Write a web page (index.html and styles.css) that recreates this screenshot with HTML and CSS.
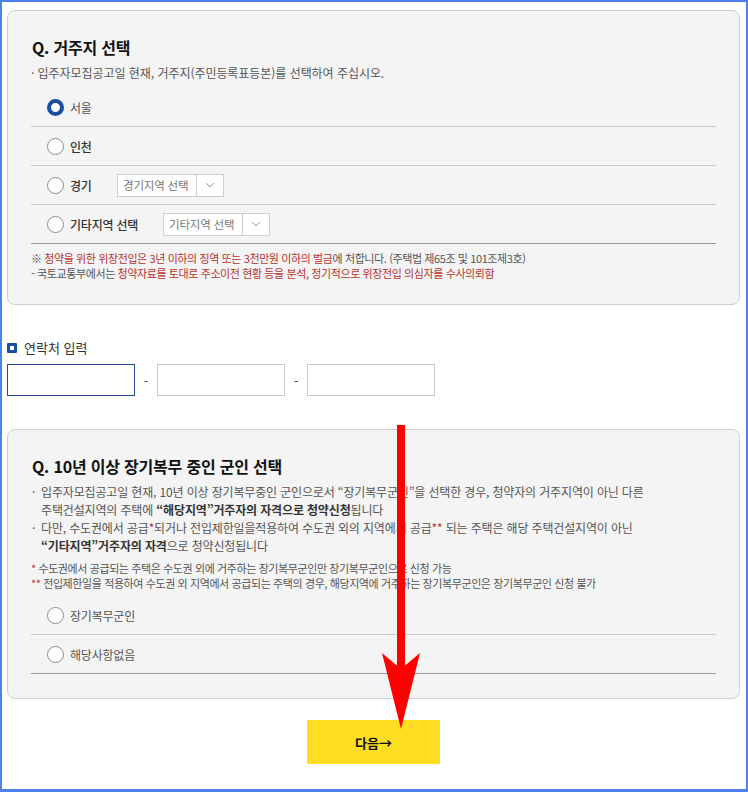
FILE: index.html
```html
<!DOCTYPE html>
<html lang="ko">
<head>
<meta charset="utf-8">
<title>청약 자격 선택</title>
<link rel="stylesheet" href="styles.css">
</head>
<body>
<div class="frame">
  <section class="card card-residence">
    <h2 class="q-title">Q. 거주지 선택</h2>
    <p class="desc">· 입주자모집공고일 현재, 거주지(주민등록표등본)를 선택하여 주십시오.</p>
    <ul class="options">
      <li class="opt"><span class="radio checked"></span><span class="lbl lbl-light">서울</span></li>
      <li class="opt"><span class="radio"></span><span class="lbl">인천</span></li>
      <li class="opt"><span class="radio"></span><span class="lbl lbl-gg">경기</span>
        <span class="select"><span class="sel-text">경기지역 선택</span><span class="sel-arrow"><svg width="10" height="6" viewBox="0 0 10 6"><path d="M1 1 L5 5 L9 1" fill="none" stroke="#999" stroke-width="1"/></svg></span></span>
      </li>
      <li class="opt last"><span class="radio"></span><span class="lbl lbl-etc">기타지역 선택</span>
        <span class="select"><span class="sel-text">기타지역 선택</span><span class="sel-arrow"><svg width="10" height="6" viewBox="0 0 10 6"><path d="M1 1 L5 5 L9 1" fill="none" stroke="#999" stroke-width="1"/></svg></span></span>
      </li>
    </ul>
    <div class="notes">
      <p>※ <span class="red">청약을 위한 위장전입은 3년 이하의 징역 또는 3천만원 이하의 벌금</span>에 처합니다. (주택법 제65조 및 101조제3호)</p>
      <p>- 국토교통부에서는 <span class="red">청약자료를 토대로 주소이전 현황 등을 분석, 정기적으로 위장전입 의심자를 수사의뢰함</span></p>
    </div>
  </section>

  <section class="contact">
    <h3 class="contact-title"><span class="sq"></span>연락처 입력</h3>
    <div class="phone">
      <span class="inp focus"></span><span class="dash">-</span><span class="inp"></span><span class="dash">-</span><span class="inp"></span>
    </div>
  </section>

  <section class="card card-military">
    <h2 class="q-title">Q. 10년 이상 장기복무 중인 군인 선택</h2>
    <ul class="bullets">
      <li>입주자모집공고일 현재, 10년 이상 장기복무중인 군인으로서 “장기복무군인”을 선택한 경우, 청약자의 거주지역이 아닌 다른<br>주택건설지역의 주택에 <b>“해당지역”거주자의 자격으로 청약신청</b>됩니다</li>
      <li>다만, 수도권에서 공급<span class="red">*</span>되거나 전입제한일을적용하여 수도권 외의 지역에서 공급<span class="red">**</span> 되는 주택은 해당 주택건설지역이 아닌<br><b>“기타지역”거주자의 자격</b>으로 청약신청됩니다</li>
    </ul>
    <div class="foot">
      <p><span class="red">*</span> 수도권에서 공급되는 주택은 수도권 외에 거주하는 장기복무군인만 장기복무군인으로 신청 가능</p>
      <p><span class="red">**</span> 전입제한일을 적용하여 수도권 외 지역에서 공급되는 주택의 경우, 해당지역에 거주하는 장기복무군인은 장기복무군인 신청 불가</p>
    </div>
    <ul class="options options-mil">
      <li class="opt"><span class="radio"></span><span class="lbl lbl-light">장기복무군인</span></li>
      <li class="opt last"><span class="radio"></span><span class="lbl lbl-light">해당사항없음</span></li>
    </ul>
  </section>

  <div class="actions">
    <button class="next">다음→</button>
  </div>

  <svg class="annot-arrow" width="48" height="310" viewBox="0 0 48 310">
    <rect x="16" y="0" width="8" height="246" fill="#ff0000"/>
    <polygon points="1,228 20,244 39,228 20,304" fill="#ff0000"/>
  </svg>
</div>
</body>
</html>
```

FILE: styles.css
```css
* { box-sizing: border-box; }
html, body { margin: 0; padding: 0; background: #fff; }
body {
  font-family: "Noto Sans CJK KR", "Noto Sans", sans-serif;
  color: #333;
}
.frame {
  position: relative;
  width: 748px;
  height: 792px;
  border: 2px solid #4f80f0;
  border-bottom-width: 3px;
  padding: 8px 6px 0 5px;
  overflow: hidden;
}
.card {
  background: #f4f4f4;
  border: 1px solid #cfcfcf;
  border-radius: 8px;
  padding: 0 23px 0 23px;
}
.card-residence { height: 295px; padding-top: 24px; }
.q-title {
  margin: 0;
  font-size: 16px;
  line-height: 24px;
  font-weight: 700;
  color: #111;
  padding-left: 1px;
  letter-spacing: -0.2px;
}
.desc {
  margin: 5px 0 0;
  font-size: 12px;
  line-height: 18px;
  color: #555;
  letter-spacing: -0.05px;
}
.options { list-style: none; margin: 6px 0 0; padding: 0; }
.opt {
  display: flex;
  align-items: center;
  height: 39px;
  border-bottom: 1px solid #c9c9c9;
  padding-left: 16px;
}
.opt.last { border-bottom-color: #999; }
.radio {
  width: 17px;
  height: 17px;
  border-radius: 50%;
  background: #fff;
  border: 1px solid #8c8c8c;
  flex: none;
}
.radio.checked { border: 4px solid #1a4f9f; }
.lbl {
  margin-left: 6px;
  font-size: 12px;
  font-weight: 500;
  color: #333;
  letter-spacing: -0.2px;
}
.lbl-light { font-weight: 400; color: #555; }
.lbl-gg { width: 47px; }
.lbl-etc { width: 93px; }
.select {
  display: flex;
  width: 107px;
  height: 23px;
  border: 1px solid #cdcdcd;
  background: #fff;
}
.sel-text {
  flex: 1;
  font-size: 11.5px;
  line-height: 21px;
  color: #777;
  padding-left: 5px;
  letter-spacing: -0.2px;
  white-space: nowrap;
}
.sel-arrow {
  width: 27px;
  border-left: 1px solid #cdcdcd;
  display: flex;
  align-items: center;
  justify-content: center;
}
.notes { margin-top: 7px; }
.notes p {
  margin: 0;
  font-size: 11px;
  line-height: 15px;
  color: #555;
  letter-spacing: -0.4px;
  white-space: nowrap;
}
.red { color: #b8322f; }
.contact { padding-top: 34px; }
.contact-title {
  margin: 0;
  display: flex;
  align-items: center;
  font-size: 13px;
  line-height: 18px;
  font-weight: 400;
  color: #333;
}
.sq {
  width: 10px;
  height: 10px;
  border: 3px solid #1a4f9f;
  background: #fff;
  margin-right: 7px;
  border-radius: 1px;
}
.phone {
  display: flex;
  align-items: center;
  margin-top: 7px;
}
.inp {
  width: 128px;
  height: 32px;
  border: 1px solid #c8c8c8;
  background: #fff;
}
.inp.focus { border-color: #1d4a96; }
.dash { width: 22px; text-align: center; font-size: 12px; color: #333; }
.card-military { margin-top: 33px; height: 270px; padding-top: 24px; }
.bullets { list-style: none; margin: 5px 0 0; padding: 0; }
.bullets li {
  position: relative;
  padding-left: 10px;
  font-size: 12px;
  line-height: 18px;
  color: #555;
  letter-spacing: -0.15px;
  white-space: nowrap;
}
.bullets li::before {
  content: "·";
  position: absolute;
  left: 1px;
  top: 0;
}
.bullets b { color: #333; font-weight: 700; }
.foot { margin-top: 6px; }
.foot p {
  margin: 0;
  font-size: 11px;
  line-height: 15px;
  color: #555;
  letter-spacing: -0.4px;
  white-space: nowrap;
}
.options-mil { margin-top: 5px; }
.actions {
  display: flex;
  justify-content: center;
  padding-top: 21px;
}
.next {
  width: 133px;
  height: 44px;
  margin-left: 0;
  border: none;
  background: #ffdd22;
  font-family: "Noto Sans CJK KR", "Noto Sans", sans-serif;
  font-size: 13px;
  font-weight: 700;
  color: #111;
}
.annot-arrow {
  position: absolute;
  left: 379px;
  top: 423px;
}
```
